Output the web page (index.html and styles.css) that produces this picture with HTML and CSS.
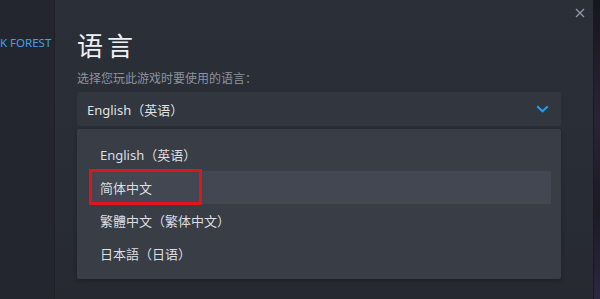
FILE: index.html
```html
<!DOCTYPE html>
<html lang="zh-CN">
<head>
<meta charset="utf-8">
<title>语言</title>
<link rel="stylesheet" href="styles.css">
</head>
<body>
<div class="page">
  <aside class="side">
    <div class="side-link">K FOREST</div>
  </aside>
  <section class="modal">
    <button class="close" aria-label="close">
      <svg width="10" height="10" viewBox="0 0 10 10"><path d="M1 1 L9 9 M9 1 L1 9" stroke="#8b99a4" stroke-width="1.4" fill="none"/></svg>
    </button>
    <h1 class="title">语言</h1>
    <p class="subtitle">选择您玩此游戏时要使用的语言：</p>
    <div class="select">
      <span class="select-value">English（英语）</span>
      <svg class="chevron" width="13" height="8" viewBox="0 0 13 8"><path d="M1.2 1.2 L6.5 6.3 L11.8 1.2" stroke="#1a9fff" stroke-width="2" fill="none"/></svg>
    </div>
    <ul class="options">
      <li class="option">English（英语）</li>
      <li class="option hover">简体中文<span class="mark"></span></li>
      <li class="option">繁體中文（繁体中文）</li>
      <li class="option">日本語（日语）</li>
    </ul>
    <div class="foot"></div>
  </section>
  <div class="edge"></div>
</div>
</body>
</html>
```
FILE: styles.css
```css
* { box-sizing: border-box; }
html, body { margin: 0; padding: 0; }
body {
  width: 600px;
  height: 299px;
  overflow: hidden;
  background: #1f2228;
  font-family: "Noto Sans", "Noto Sans CJK SC", sans-serif;
}
.page {
  display: flex;
  height: 299px;
}
.side {
  width: 55px;
  flex: none;
  background: #23262e;
  padding-top: 35px;
  overflow: hidden;
  border-right: 1px solid #1f2127;
}
.side-link {
  color: #4d9de3;
  font-size: 11.5px;
  line-height: 16px;
  margin-left: 0;
  white-space: nowrap;
  letter-spacing: 0;
}
.modal {
  position: relative;
  width: 538px;
  flex: none;
  display: flex;
  flex-direction: column;
  padding: 0 32px 0 22px;
  background: linear-gradient(180deg, #2b2f38 0%, #282c34 70%, #262930 100%);
}
.close {
  position: absolute;
  top: 5px;
  right: 7px;
  width: 12px;
  height: 12px;
  padding: 1px;
  border: 0;
  background: none;
}
.title {
  margin: 29px 0 0;
  font-size: 26px;
  line-height: 31px;
  font-weight: 400;
  letter-spacing: 4px;
  color: #eef0f2;
  font-family: "Noto Sans CJK SC", sans-serif;
}
.subtitle {
  margin: 10px 0 0;
  font-size: 12px;
  line-height: 16px;
  color: #8c939b;
  font-family: "Noto Sans CJK SC", sans-serif;
}
.select {
  margin-top: 6px;
  height: 34px;
  display: flex;
  align-items: center;
  justify-content: space-between;
  padding: 0 12px 0 10px;
  background: #32363f;
  border-radius: 2px;
}
.select-value {
  font-size: 13px;
  color: #dfe1e3;
}
.options {
  list-style: none;
  margin: 3px 0 0;
  padding: 9px 10px 9px 12px;
  height: 150px;
  background: #393d46;
  border-radius: 2px;
  box-shadow: 0 2px 4px rgba(0,0,0,0.25);
}
.option {
  position: relative;
  height: 33px;
  display: flex;
  align-items: center;
  padding-left: 11px;
  font-size: 13px;
  color: #dcdee0;
}
.option.hover {
  background: #424751;
}
.mark {
  position: absolute;
  left: 0;
  top: -2px;
  width: 113px;
  height: 36px;
  border: 3px solid #e0141b;
}
.foot {
  flex: 1;
}
.edge {
  flex: 1;
  background: linear-gradient(180deg, #17161d 0%, #2a2336 40%, #1c1a25 70%, #2b2740 100%);
  border-left: 1px solid #1a1b20;
}
```
